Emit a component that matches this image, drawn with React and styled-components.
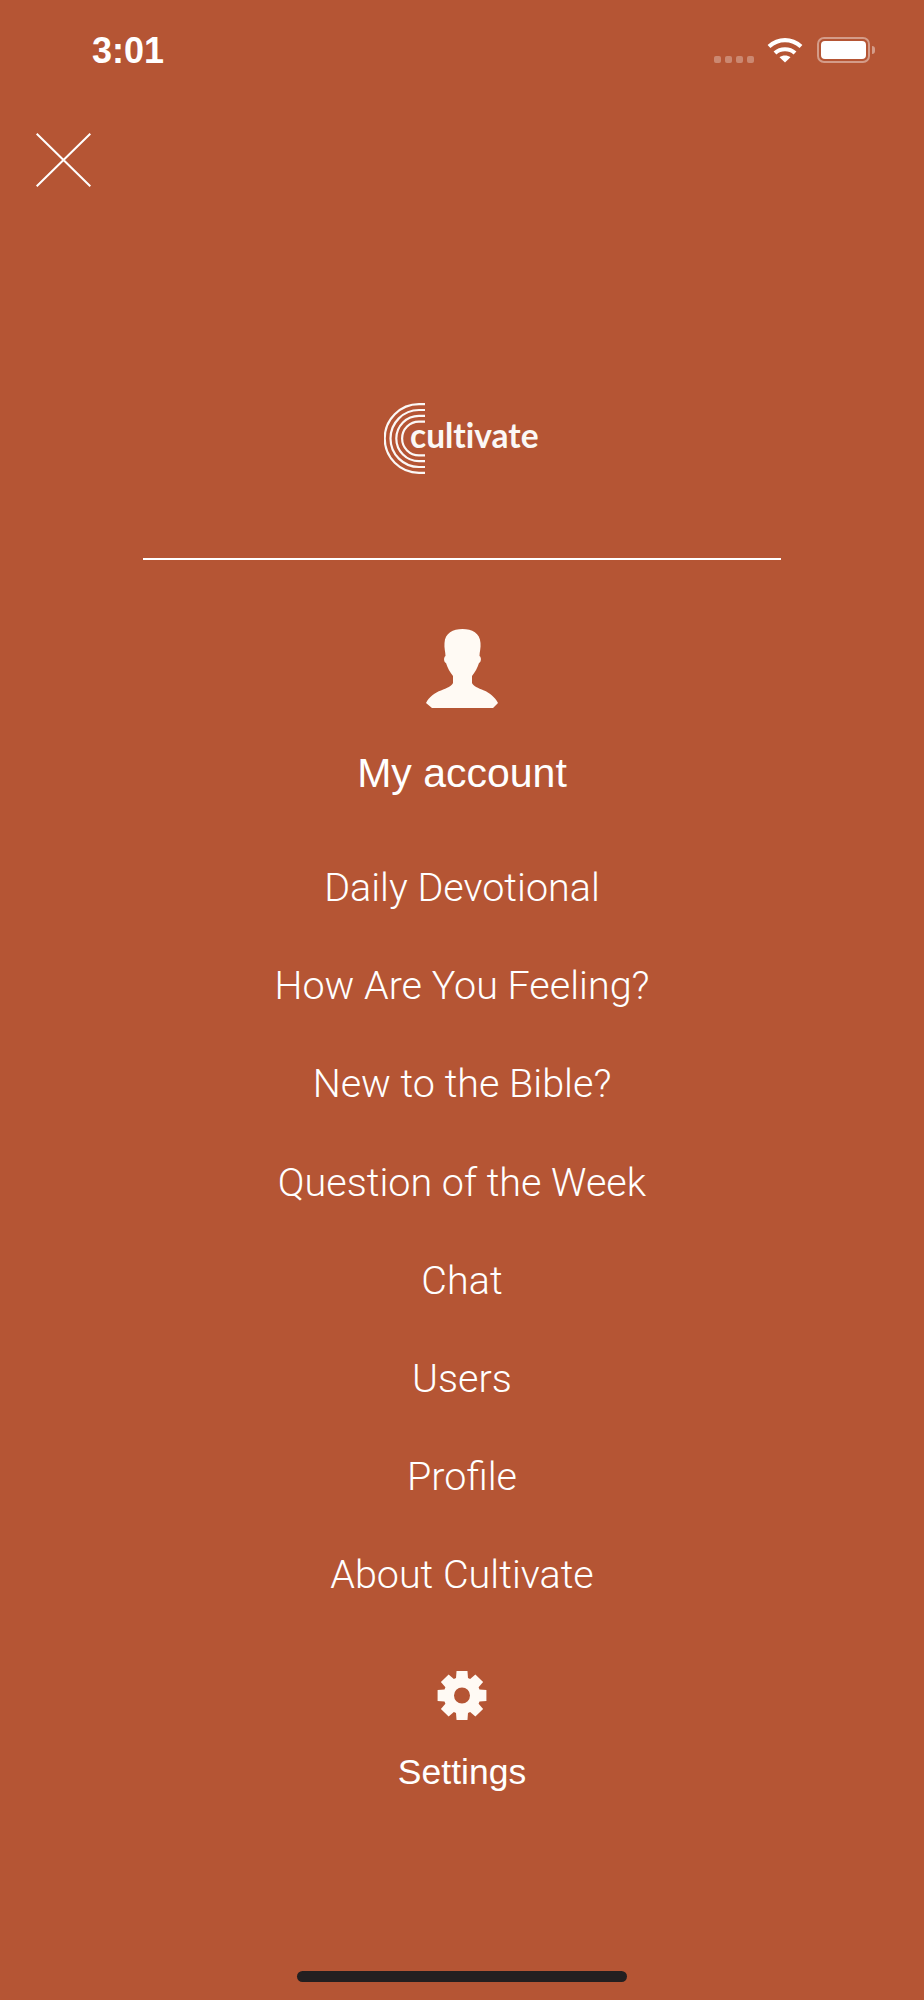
import React from "react";
import styled, { createGlobalStyle } from "styled-components";

const Global = createGlobalStyle`
  html, body { margin: 0; padding: 0; background: #b55534; }
  * { box-sizing: border-box; }
`;

const Screen = styled.div`
  width: 924px;
  height: 2000px;
  background: #b55534;
  color: #fffaf4;
  display: flex;
  flex-direction: column;
  align-items: center;
  font-family: "Liberation Sans", Arial, sans-serif;
  overflow: hidden;
`;

const StatusBar = styled.div`
  width: 100%;
  height: 100px;
  padding: 30px 54px 0 92px;
  display: flex;
  justify-content: space-between;
  align-items: flex-start;
`;

const Time = styled.div`
  font-size: 36px;
  line-height: 42px;
  font-weight: 700;
  color: #fff;
`;

const StatusIcons = styled.div`
  margin-top: 7px;
  display: flex;
  align-items: flex-end;
`;

const SignalDots = styled.div`
  display: flex;
  gap: 4px;
  margin-right: 13px;
`;

const SignalDot = styled.span`
  width: 7px;
  height: 7px;
  border-radius: 2px;
  background: rgba(255, 255, 255, 0.3);
`;

const Battery = styled.div`
  margin-left: 14px;
  width: 53px;
  height: 26px;
  border: 2px solid rgba(255, 255, 255, 0.42);
  border-radius: 7px;
  padding: 2px;
  position: relative;
`;

const BatteryFill = styled.div`
  width: 100%;
  height: 100%;
  background: #fff;
  border-radius: 4px;
`;

const BatteryCap = styled.span`
  position: absolute;
  right: -7px;
  top: 7px;
  width: 3px;
  height: 8px;
  background: rgba(255, 255, 255, 0.42);
  border-radius: 0 3px 3px 0;
`;

const CloseRow = styled.div`
  width: 100%;
  padding: 33px 0 0 36px;
  height: 303px;
`;

const Logo = styled.div`
  width: 155px;
  height: 70px;
  margin-left: -1px;
  position: relative;
`;

const LogoWord = styled.span`
  position: absolute;
  left: 26px;
  top: 10px;
  font-family: "Lato", sans-serif;
  font-weight: 700;
  font-size: 33.5px;
  line-height: 44px;
  font-variant-ligatures: none;
  color: #fbf8f6;
`;

const Divider = styled.div`
  width: 638px;
  height: 2px;
  margin-top: 85px;
  background: #fff;
`;

const Account = styled.div`
  margin-top: 69px;
  display: flex;
  flex-direction: column;
  align-items: center;
`;

const AccountLabel = styled.div`
  margin-top: 43px;
  font-size: 41px;
  line-height: 44px;
  color: #fff;
`;

const Menu = styled.nav`
  margin-top: 44px;
  display: flex;
  flex-direction: column;
  align-items: center;
`;

const MenuItem = styled.div`
  font-family: "Roboto", sans-serif;
  font-weight: 300;
  font-size: 39.5px;
  line-height: 98.2px;
  color: #fff;
`;

const Settings = styled.div`
  margin-top: 46px;
  display: flex;
  flex-direction: column;
  align-items: center;
`;

const SettingsLabel = styled.div`
  margin-top: 32px;
  font-size: 35.5px;
  line-height: 40px;
  color: #fff;
`;

const HomeIndicator = styled.div`
  margin-top: auto;
  margin-bottom: 18px;
  width: 330px;
  height: 11px;
  border-radius: 6px;
  background: #231f20;
`;

function gearPath() {
  const cx = 25, cy = 24.5, teeth = 8, R = 25, r = 18.5;
  const pts = [];
  for (let i = 0; i < teeth; i++) {
    const a = (i * 2 * Math.PI) / teeth - Math.PI / 2;
    [[r, -0.33], [R, -0.22], [R, 0.22], [r, 0.33]].forEach(([rad, d]) => {
      pts.push(`${(cx + rad * Math.cos(a + d)).toFixed(2)} ${(cy + rad * Math.sin(a + d)).toFixed(2)}`);
    });
  }
  return `M${pts.join("L")}Z M${cx + 8} ${cy}a8 8 0 1 0 -16 0a8 8 0 1 0 16 0Z`;
}

const items = [
  "Daily Devotional",
  "How Are You Feeling?",
  "New to the Bible?",
  "Question of the Week",
  "Chat",
  "Users",
  "Profile",
  "About Cultivate",
];

export default function App() {
  return (
    <Screen>
      <Global />
      <StatusBar>
        <Time>3:01</Time>
        <StatusIcons>
          <SignalDots>
            <SignalDot /><SignalDot /><SignalDot /><SignalDot />
          </SignalDots>
          <svg width="36" height="26" viewBox="0 0 36 26" fill="none" stroke="#fff" strokeWidth="4.2">
            <path d="M2 9.500C11.500 1 24.500 1 34 9.500" />
            <path d="M8 16C13.500 11 22.500 11 28 16" />
            <path d="M18 25.500L12.500 20.300C15.500 17.800 20.500 17.800 23.500 20.300Z" fill="#fff" stroke="none" />
          </svg>
          <Battery>
            <BatteryFill />
            <BatteryCap />
          </Battery>
        </StatusIcons>
      </StatusBar>
      <CloseRow>
        <svg width="55" height="54" viewBox="0 0 55 54" stroke="#fff" strokeWidth="2" fill="none" style={{ display: "block" }}>
          <path d="M0.7 0.7L54.300 53.300M54.300 0.7L0.7 53.300" />
        </svg>
      </CloseRow>
      <Logo>
        <svg width="42" height="71" viewBox="0 0 42 71" fill="none" stroke="#fbf8f6" strokeWidth="2.2" style={{ display: "block" }}>
          <path d="M41 1.200H35A34.300 34.300 0 0 0 35 69.800H41" />
          <path d="M41 7H35A28.500 28.500 0 0 0 35 64H41" />
          <path d="M41 12.800H35A22.700 22.700 0 0 0 35 58.200H41" />
          <path d="M41 18.600H35A16.900 16.900 0 0 0 35 52.400H41" />
        </svg>
        <LogoWord>cultivate</LogoWord>
      </Logo>
      <Divider />
      <Account>
        <svg width="72" height="79" viewBox="0 0 72 79" fill="#fffaf4" style={{ display: "block" }}>
          <path d="M36.500 0C46 0 54 4 54.500 14C55 19 53.500 23 53.500 27C55.500 28 55.500 33 53 34C51.500 39 49 43 46 47L46 54C47 57 52 59 58 61.500C63 63.500 69 68 72 74L67 79H6L0 74C3 68 9 63.500 15 61.500C21 59 26 57 27 54L27 47C24 43 21.500 39 20 34C17.500 33 17.500 28 19.500 27C19.500 23 18 19 18.500 14C19 4 27 0 36.500 0Z" />
        </svg>
        <AccountLabel>My account</AccountLabel>
      </Account>
      <Menu>
        {items.map((t) => (
          <MenuItem key={t}>{t}</MenuItem>
        ))}
      </Menu>
      <Settings>
        <svg width="50" height="49" viewBox="0 0 50 49" fill="#fffaf4" fillRule="evenodd" style={{ display: "block" }}>
          <path d={gearPath()} />
        </svg>
        <SettingsLabel>Settings</SettingsLabel>
      </Settings>
      <HomeIndicator />
    </Screen>
  );
}
